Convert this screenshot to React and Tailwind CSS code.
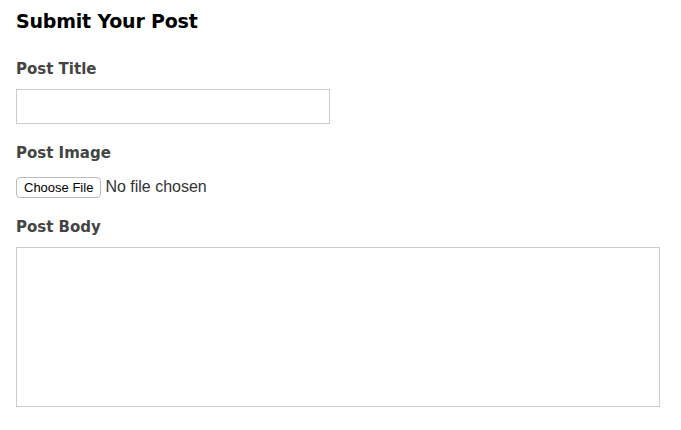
import React from "react";

const Label = ({ children, htmlFor }) => (
  <label
    htmlFor={htmlFor}
    className="block text-[15px] leading-[18px] font-bold text-[#444]"
  >
    {children}
  </label>
);

const App = () => {
  return (
    <div className="min-h-screen bg-white px-4 pt-[10px] font-['DejaVu_Sans',sans-serif]">
      <h2 className="text-[19px] leading-[22px] font-bold text-black tracking-[-0.2px]">
        Submit Your Post
      </h2>

      <form className="flex flex-col">
        {/* title */}
        <div className="mt-[28px]">
          <Label htmlFor="title">Post Title</Label>
          <input
            id="title"
            type="text"
            className="mt-[11px] block w-[314px] h-[35px] border border-[#ccc] px-2 outline-none"
          />
        </div>

        {/* image */}
        <div className="mt-[20px]">
          <Label htmlFor="image">Post Image</Label>
          <input
            id="image"
            type="file"
            className="mt-[13px] block font-['Liberation_Sans',sans-serif] text-[16px] text-[#333] file:mr-[4px] file:h-[21px] file:px-[7px] file:text-[13px] file:text-black file:bg-white file:border file:border-[#bbb] file:rounded-[4px] file:font-['Liberation_Sans',sans-serif]"
          />
        </div>

        {/* body */}
        <div className="mt-[19px]">
          <Label htmlFor="body">Post Body</Label>
          <textarea
            id="body"
            className="mt-[11px] block w-[644px] h-[160px] border border-[#ccc] resize-none outline-none"
          />
        </div>
      </form>
    </div>
  );
};

export default App;
